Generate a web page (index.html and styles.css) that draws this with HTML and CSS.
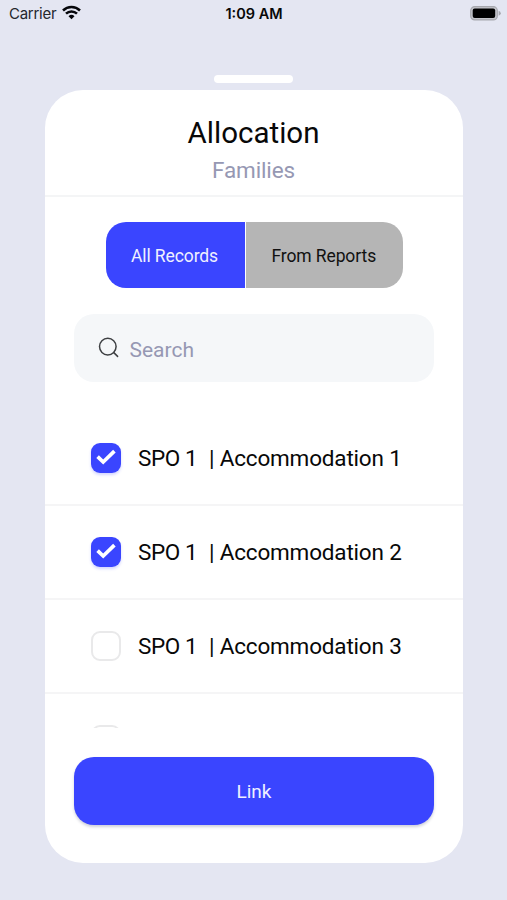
FILE: index.html
```html
<!DOCTYPE html>
<html lang="en">
<head>
<meta charset="utf-8">
<meta name="viewport" content="width=device-width, initial-scale=1">
<title>Allocation</title>
<link rel="stylesheet" href="styles.css">
</head>
<body>
<header class="status">
  <div class="carrier"><span>Carrier</span>
    <svg class="wifi" width="19" height="15" viewBox="0 0 19 15"><g fill="none" stroke="#06070b" stroke-width="2.5"><path d="M1 5.5a12.2 12.2 0 0 1 17 0"/><path d="M4 8.7a7.8 7.8 0 0 1 11 0"/></g><path d="M9.5 14.2 6.5 11.3a4.3 4.3 0 0 1 6 0z" fill="#06070b"/></svg>
  </div>
  <div class="time">1:09 AM</div>
  <div class="power"><svg width="31" height="15" viewBox="0 0 31 15"><rect x=".7" y=".7" width="26.6" height="13.2" rx="4" fill="#c4c5cb" stroke="#a6a7ad" stroke-width="1.2"/><rect x="2.7" y="2.6" width="22.5" height="9.4" rx="2" fill="#000"/><path d="M28.6 4.8q2.2.8 2.2 2.5t-2.2 2.5z" fill="#a6a7ad"/></svg></div>
</header>
<div class="handle"></div>
<main class="card">
  <div class="heading">
    <h1>Allocation</h1>
    <p>Families</p>
  </div>
  <div class="tabs">
    <button class="tab active">All Records</button>
    <button class="tab">From Reports</button>
  </div>
  <div class="search">
    <svg width="21" height="21" viewBox="0 0 21 21" fill="none" stroke="#3e4043" stroke-width="1.5" stroke-linecap="round"><circle cx="9.8" cy="9.6" r="8.3"/><path d="m15.8 15.6 3.8 3.8"/></svg>
    <span>Search</span>
  </div>
  <div class="list">
    <div class="row"><span class="box checked"><svg width="20" height="16" viewBox="0 0 20 16"><path d="m1.6 7.6 5.6 5.4L18.4 2.2" fill="none" stroke="#fff" stroke-width="3.7"/></svg></span><span class="spo">SPO 1</span><span class="name">| Accommodation 1</span></div>
    <div class="row"><span class="box checked"><svg width="20" height="16" viewBox="0 0 20 16"><path d="m1.6 7.6 5.6 5.4L18.4 2.2" fill="none" stroke="#fff" stroke-width="3.7"/></svg></span><span class="spo">SPO 1</span><span class="name">| Accommodation 2</span></div>
    <div class="row"><span class="box"></span><span class="spo">SPO 1</span><span class="name">| Accommodation 3</span></div>
    <div class="row"><span class="box"></span></div>
  </div>
  <button class="link">Link</button>
</main>
</body>
</html>
```
FILE: styles.css
```css
* { box-sizing: border-box; }
body {
  margin: 0;
  height: 900px;
  overflow: hidden;
  background: #e4e6f2;
  font-family: Roboto, "Liberation Sans", sans-serif;
  color: #080808;
}
button { border: 0; padding: 0; font-family: inherit; }
.status {
  display: grid;
  grid-template-columns: 1fr auto 1fr;
  align-items: center;
  height: 27px;
  padding: 0 6px 0 9px;
  font: 15px/27px Inter, Roboto, sans-serif;
}
.carrier { display: flex; align-items: center; gap: 6px; color: #25272d; letter-spacing: -.27px; }
.wifi { margin-top: -2px; }
.time { font-weight: 600; font-size: 14.5px; margin-left: -2px; }
.power { display: flex; justify-content: flex-end; margin-top: -1px; }
.handle { width: 79px; height: 7.5px; margin: 48px 0 0 214.4px; border-radius: 4px; background: #fff; }
.card {
  display: flex;
  flex-direction: column;
  width: 418px;
  height: 773px;
  margin: 7.5px 0 0 45px;
  border-radius: 38px;
  background: #fff;
  overflow: hidden;
}
.heading { height: 106.5px; padding-top: 24.5px; border-bottom: 2px solid #f4f5f6; text-align: center; }
h1 { margin: 0 1px 0 0; font-size: 29.5px; line-height: 36px; font-weight: 400; }
.heading p { margin: 1px 1px 0 0; font-size: 22.5px; line-height: 37px; letter-spacing: -.15px; color: #9698b3; }
.tabs { display: flex; gap: 1.5px; width: 297px; height: 66px; margin: 25px 0 0 60.5px; border-radius: 20px; overflow: hidden; flex: none; }
.tab { flex: 1; font-size: 17.5px; letter-spacing: -.1px; color: #111; background: #b5b5b5; padding: 2px 1px 0 0; }
.tab.active { flex: 0 0 139px; color: #eff0ff; background: #3a45ff; }
.search {
  display: flex;
  align-items: center;
  gap: 10.5px;
  flex: none;
  width: 360px;
  height: 68px;
  margin: 26px 0 0 29px;
  padding-left: 24px;
  border-radius: 20px;
  background: #f5f7f9;
  color: #9698b3;
  font-size: 21px;
}
.search span { padding-top: 4px; }
.list { height: 316px; margin-top: 30px; overflow: hidden; flex: none; }
.row { display: flex; align-items: center; height: 94px; padding-left: 46px; border-bottom: 2px solid #f5f5f6; font-size: 22.5px; letter-spacing: -.18px; }
.box { display: flex; align-items: center; justify-content: center; width: 30px; height: 30px; border: 2px solid #e9e9ea; border-radius: 9px; }
.box.checked { border: 0; background: #3a45ff; box-shadow: 0 2px 3px #3a45ff38; }
.box svg { margin-top: -2px; }
.spo { width: 71px; margin-left: 17px; padding-top: 1px; white-space: nowrap; letter-spacing: -.4px; }
.name { padding-top: 1px; white-space: nowrap; }
.link {
  flex: none;
  width: 360px;
  height: 68.5px;
  margin: 29px 0 0 29px;
  padding-top: 1.5px;
  border-radius: 20px;
  background: #3a45ff;
  color: #eff0ff;
  font-size: 19px;
  box-shadow: 0 2px 3px #20285538;
}
```
